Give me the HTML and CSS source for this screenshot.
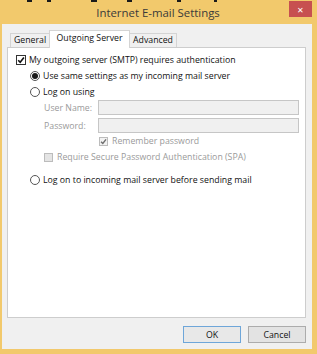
FILE: index.html
```html
<!DOCTYPE html>
<html lang="en">
<head>
    <meta charset="UTF-8">
    <title>Internet E-mail Settings</title>
    <link rel="stylesheet" href="styles.css">
</head>
<body>
    <div class="window">
        <div class="titlebar">
            <div class="bleed">
                <span style="width:5px;margin-left:25px"></span>
                <span style="width:4px;margin-left:15px"></span>
                <span style="width:6px;margin-left:40px"></span>
                <span style="width:5px;margin-left:30px"></span>
                <span style="width:4px;margin-left:45px"></span>
                <span style="width:3px;margin-left:33px"></span>
            </div>
            <div class="title-row">
                <span class="title">Internet E-mail Settings</span>
                <span class="close">&#x2715;</span>
            </div>
        </div>

        <div class="client">
            <div class="tabs">
                <div class="tab">General</div>
                <div class="tab active">Outgoing Server</div>
                <div class="tab">Advanced</div>
            </div>

            <div class="panel">
                <div class="row">
                    <span class="check">
                        <svg viewBox="0 0 8 8"><path d="M1.2 4.2 L3.2 6.3 L6.9 1.5" /></svg>
                    </span>
                    <span>My outgoing server (SMTP) requires authentication</span>
                </div>
                <div class="row indent1">
                    <span class="radio selected"></span>
                    <span>Use same settings as my incoming mail server</span>
                </div>
                <div class="row indent1">
                    <span class="radio"></span>
                    <span>Log on using</span>
                </div>

                <div class="field indent2">
                    <label class="muted">User Name:</label>
                    <span class="input"></span>
                </div>
                <div class="field indent2 second">
                    <label class="muted">Password:</label>
                    <span class="input"></span>
                </div>

                <div class="row indent3">
                    <span class="check small disabled">
                        <svg viewBox="0 0 8 8"><path d="M1.2 4.2 L3.2 6.3 L6.9 1.5" /></svg>
                    </span>
                    <span class="muted">Remember password</span>
                </div>
                <div class="row indent2">
                    <span class="check small disabled empty"></span>
                    <span class="muted">Require Secure Password Authentication (SPA)</span>
                </div>

                <div class="row indent1 spaced">
                    <span class="radio"></span>
                    <span>Log on to incoming mail server before sending mail</span>
                </div>
            </div>

            <div class="buttons">
                <button class="btn default">OK</button>
                <button class="btn">Cancel</button>
            </div>
        </div>
    </div>
</body>
</html>
```

FILE: styles.css
```css
* {
    box-sizing: border-box;
}

body {
    margin: 0;
    background-color: #f2c96c;
    font-family: "Open Sans", "Noto Sans", sans-serif;
    font-size: 8.75px;
    color: #111;
}

.window {
    width: 317px;
    height: 354px;
    background-color: #f2c96c;
    padding: 0 5px 5px 2px;
    display: flex;
    flex-direction: column;
}

/* barra de titulo */
.titlebar {
    height: 24px;
    display: flex;
    flex-direction: column;
}

.bleed {
    height: 2px;
    display: flex;
    overflow: hidden;
}

.bleed span {
    height: 2px;
    background-color: #1a1a1a;
}

.title-row {
    flex: 1;
    display: flex;
    align-items: flex-start;
    justify-content: center;
    position: relative;
}

.title {
    font-size: 11.4px;
    color: #3a3a3a;
    line-height: 22px;
    margin-left: 2px;
}

.close {
    position: absolute;
    right: 0;
    top: -1px;
    width: 23px;
    height: 16px;
    background-color: #c75050;
    color: #fff;
    font-size: 8px;
    display: flex;
    align-items: center;
    justify-content: center;
}

/* area cinza */
.client {
    flex: 1;
    background-color: #f0f0f0;
    padding: 6px 6px 6px 5px;
    display: flex;
    flex-direction: column;
}

.tabs {
    height: 17px;
    display: flex;
    align-items: flex-end;
    padding-left: 3px;
}

.tab {
    height: 14px;
    border: 1px solid #d4d4d4;
    border-bottom: none;
    background-color: #f0f0f0;
    padding: 0;
    line-height: 13px;
    width: 40px;
    text-align: center;
    white-space: nowrap;
}

.tab.active {
    height: 18px;
    margin-bottom: -1px;
    width: 81px;
    margin-left: -1px;
    margin-right: -1px;
    background-color: #fff;
    line-height: 15px;
    z-index: 1;
}

.tab:last-child {
    width: 48px;
}

.panel {
    flex: 1;
    background-color: #fff;
    border: 1px solid #cdcdcd;
    padding: 4px 6px 0 8px;
}

.row {
    height: 16px;
    display: flex;
    align-items: center;
    white-space: nowrap;
}

.indent1 {
    padding-left: 14px;
}

.indent2 {
    padding-left: 28px;
}

.indent3 {
    padding-left: 83px;
}

.spaced {
    margin-top: 7px;
}

.check {
    width: 10px;
    height: 10px;
    border: 1px solid #333;
    background-color: #fff;
    margin-right: 3px;
    display: flex;
}

.check.small {
    width: 9px;
    height: 9px;
    margin-right: 4px;
}

.check svg {
    width: 100%;
    height: 100%;
}

.check path {
    fill: none;
    stroke: #111;
    stroke-width: 1.6;
}

.check.disabled {
    border-color: #bcbcbc;
    background-color: #f2f2f2;
}

.check.disabled path {
    stroke: #6e6e6e;
}

.check.empty {
    background-color: #e4e4e4;
}

.radio {
    width: 10px;
    height: 10px;
    border: 1px solid #555;
    border-radius: 50%;
    background-color: #fff;
    margin-right: 3px;
    display: flex;
    align-items: center;
    justify-content: center;
}

.radio.selected::after {
    content: "";
    width: 6px;
    height: 6px;
    border-radius: 50%;
    background-color: #1a1a1a;
}

.muted {
    color: #9a9a9a;
}

.field {
    height: 15px;
    display: flex;
    align-items: center;
}

.field.second {
    margin-top: 3px;
}

.field label {
    width: 54px;
    white-space: nowrap;
}

.input {
    flex: 1;
    height: 15px;
    border: 1px solid #c6c6c6;
    background-color: #f0f0f0;
}

/* botoes */
.buttons {
    margin-top: 8px;
    display: flex;
    justify-content: flex-end;
    gap: 7px;
}

.btn {
    width: 58px;
    height: 17px;
    padding: 0;
    font-family: inherit;
    font-size: 8.75px;
    color: #111;
    background-color: #e3e3e3;
    border: 1px solid #acacac;
}

.btn.default {
    border-color: #6ea6d9;
    background-color: #e8e8e8;
}
```
